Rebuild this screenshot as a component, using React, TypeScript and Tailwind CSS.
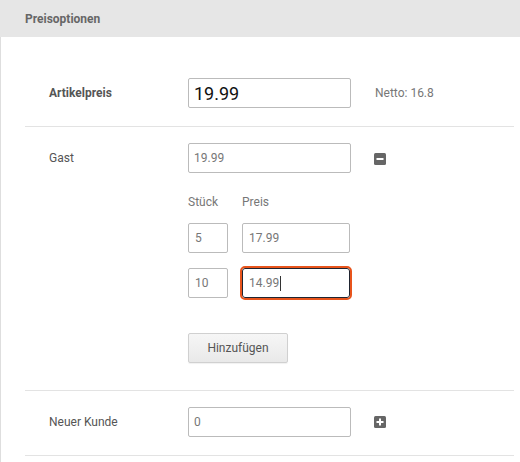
export default function App() {
  return (
    <div className="w-[520px] h-[462px] overflow-hidden bg-white font-['Roboto',sans-serif] text-[12px] text-[#666]">
      {/* Header */}
      <div className="h-[37px] bg-[#e6e6e6] px-[25px] flex items-center font-bold text-[#666]">
        Preisoptionen
      </div>

      {/* Body */}
      <div className="border-l border-[#dedede] pl-[24px] pr-[6px] h-[425px]">
        {/* Artikelpreis */}
        <div className="flex items-center pt-[41px] pb-[18px] border-b border-[#e3e3e3]">
          <div className="w-[163px] pl-[24px] font-bold text-[#555]">Artikelpreis</div>
          <input
            readOnly
            value="19.99"
            className="w-[163px] h-[30px] border border-[#bbb] rounded-[2px] px-[5px] text-[18px] text-[#111] outline-none"
          />
          <div className="ml-[24px] text-[#777]">Netto: 16.8</div>
        </div>

        {/* Gast */}
        <div className="flex items-start pt-[16px] pb-[27px] border-b border-[#e3e3e3]">
          <div className="w-[163px] pl-[24px] h-[30px] flex items-center text-[#555]">Gast</div>
          <div className="flex flex-col">
            <div className="flex items-center">
              <input
                readOnly
                value="19.99"
                className="w-[163px] h-[30px] border border-[#bbb] rounded-[2px] px-[5px] text-[#777] outline-none"
              />
              <MinusIcon />
            </div>
            <div className="flex mt-[21px] h-[16px] leading-[16px] text-[#777]">
              <div className="w-[54px]">Stück</div>
              <div>Preis</div>
            </div>
            <div className="flex gap-[14px] mt-[13px]">
              <input
                readOnly
                value="5"
                className="w-[40px] h-[30px] border border-[#bbb] rounded-[2px] px-[6px] text-[#777] outline-none"
              />
              <input
                readOnly
                value="17.99"
                className="w-[108px] h-[30px] border border-[#bbb] rounded-[2px] px-[6px] text-[#777] outline-none"
              />
            </div>
            <div className="flex gap-[14px] mt-[15px]">
              <input
                readOnly
                value="10"
                className="w-[40px] h-[30px] border border-[#bbb] rounded-[2px] px-[6px] text-[#777] outline-none"
              />
              <div className="w-[108px] h-[30px] border border-[#1f2430] px-[6px] text-[#777] flex items-center outline-2 outline-[#e8541c] rounded-[3px]">
                14.99
                <span className="inline-block w-px h-[15px] bg-[#333] ml-px" />
              </div>
            </div>
            <button className="mt-[35px] w-[100px] h-[30px] border border-[#d0d0d0] rounded-[2px] bg-linear-to-b from-[#f6f6f6] to-[#e9e9e9] text-[#555] shadow-[0_1px_1px_rgba(0,0,0,0.06)]">
              Hinzufügen
            </button>
          </div>
        </div>

        {/* Neuer Kunde */}
        <div className="flex items-center pt-[16px] pb-[18px] border-b border-[#e3e3e3]">
          <div className="w-[163px] pl-[24px] text-[#555]">Neuer Kunde</div>
          <input
            readOnly
            value="0"
            className="w-[163px] h-[30px] border border-[#bbb] rounded-[2px] px-[5px] text-[#777] outline-none"
          />
          <PlusIcon />
        </div>
      </div>
    </div>
  )
}

function MinusIcon() {
  return (
    <svg width="12" height="12" viewBox="0 0 12 12" className="ml-[23px] mt-[2px]">
      <rect x="0" y="0" width="12" height="12" rx="1.5" fill="#666" />
      <rect x="2.5" y="5" width="7" height="2" fill="#fff" />
    </svg>
  )
}

function PlusIcon() {
  return (
    <svg width="12" height="12" viewBox="0 0 12 12" className="ml-[23px]">
      <rect x="0" y="0" width="12" height="12" rx="1.5" fill="#666" />
      <rect x="2.5" y="5" width="7" height="2" fill="#fff" />
      <rect x="5" y="2.5" width="2" height="7" fill="#fff" />
    </svg>
  )
}
